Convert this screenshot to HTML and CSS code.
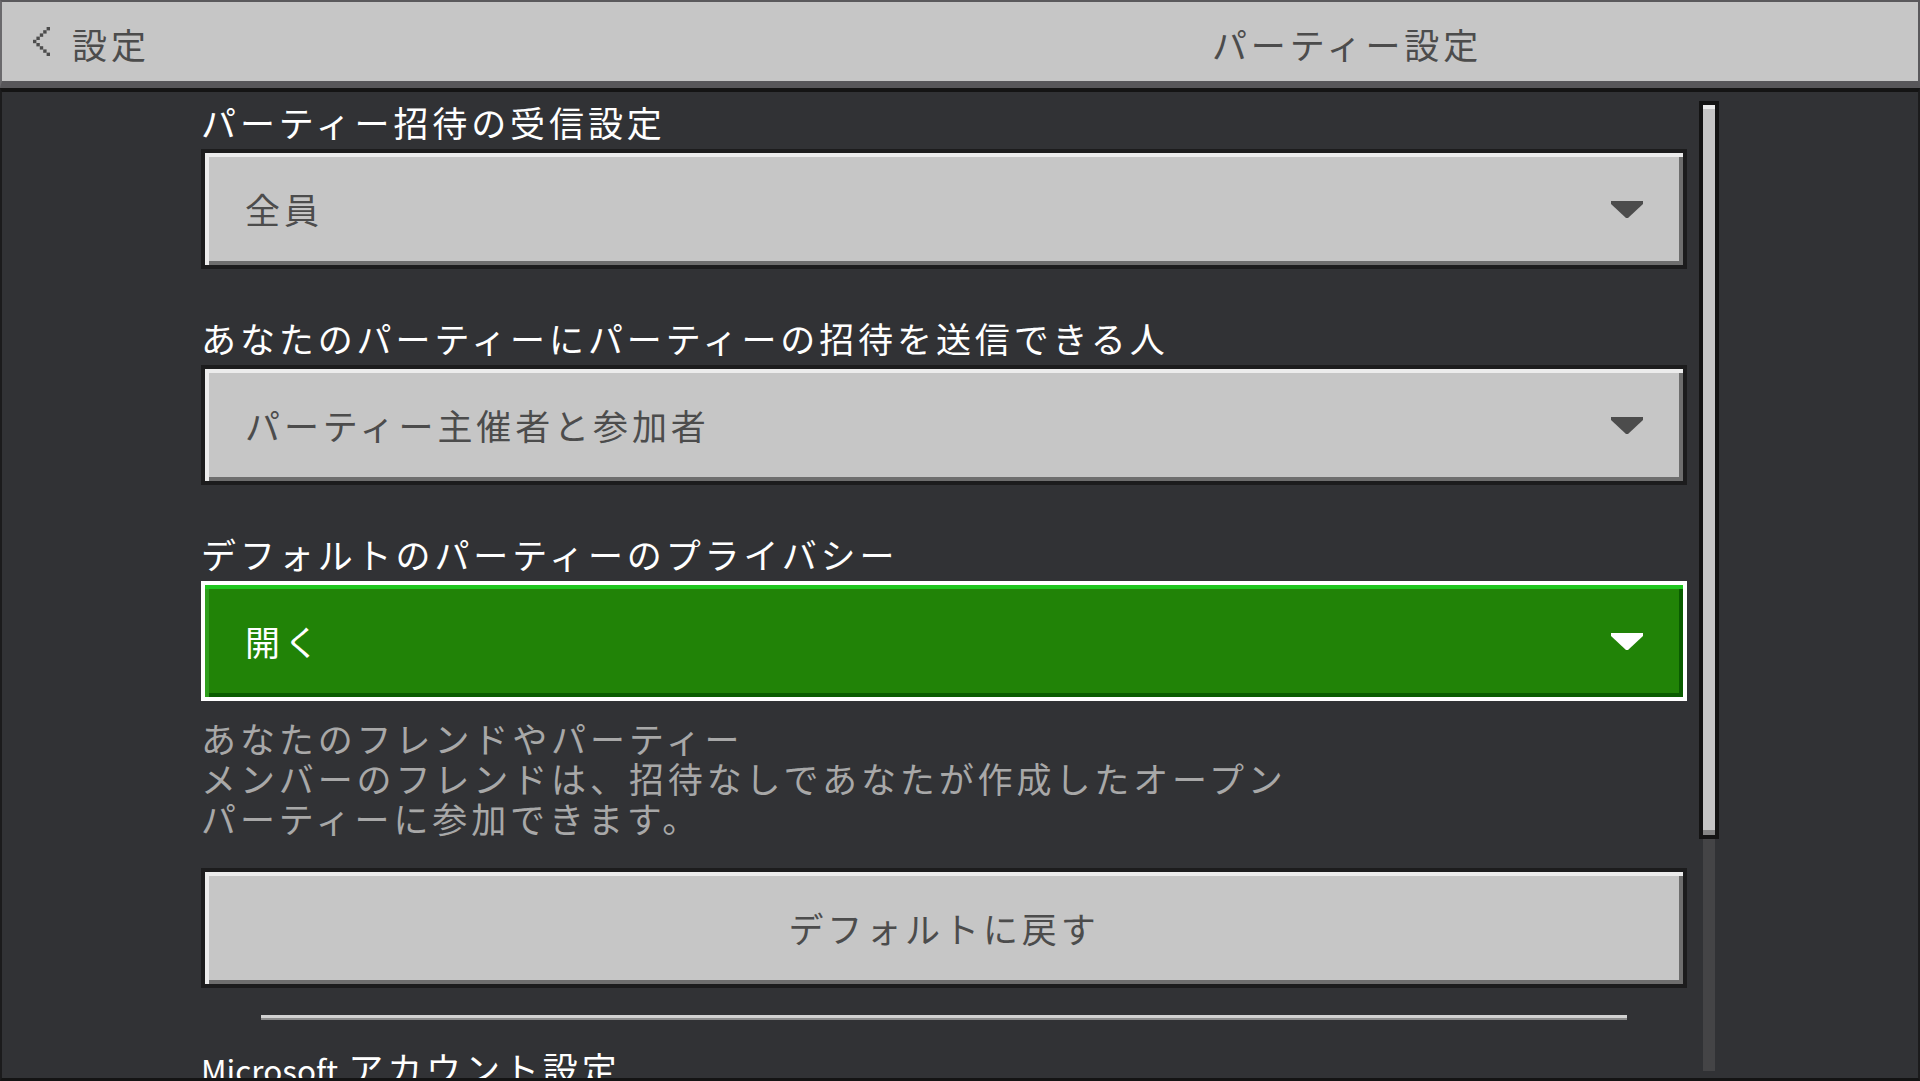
FILE: index.html
```html
<!DOCTYPE html>
<html lang="ja">
<head>
<meta charset="utf-8">
<title>パーティー設定</title>
<link rel="stylesheet" href="styles.css">
</head>
<body>
<div class="app">
  <header class="topbar">
    <div class="back">
      <svg class="chev" width="17" height="29" viewBox="0 0 17 29" aria-hidden="true">
        <g fill="#4c4c4c">
          <rect x="13.6" y="0" width="3.4" height="3.4"/>
          <rect x="10.2" y="3.2" width="3.4" height="3.4"/>
          <rect x="6.8" y="6.4" width="3.4" height="3.4"/>
          <rect x="3.4" y="9.6" width="3.4" height="3.4"/>
          <rect x="0" y="12.8" width="3.4" height="3.4"/>
          <rect x="3.4" y="16" width="3.4" height="3.4"/>
          <rect x="6.8" y="19.2" width="3.4" height="3.4"/>
          <rect x="10.2" y="22.4" width="3.4" height="3.4"/>
          <rect x="13.6" y="25.6" width="3.4" height="3.4"/>
        </g>
      </svg>
      <span class="back-text">設定</span>
    </div>
    <div class="title">パーティー設定</div>
  </header>
  <main class="main">
    <div class="column">
      <section class="field">
        <div class="label">パーティー招待の受信設定</div>
        <div class="dropdown">
          <span class="value">全員</span>
          <svg class="arrow" width="32" height="17" viewBox="0 0 32 17" aria-hidden="true"><polygon points="0,0 32,0 32,3 17,17 15,17 0,3" fill="#4c4c4c"/></svg>
        </div>
      </section>
      <section class="field">
        <div class="label">あなたのパーティーにパーティーの招待を送信できる人</div>
        <div class="dropdown">
          <span class="value">パーティー主催者と参加者</span>
          <svg class="arrow" width="32" height="17" viewBox="0 0 32 17" aria-hidden="true"><polygon points="0,0 32,0 32,3 17,17 15,17 0,3" fill="#4c4c4c"/></svg>
        </div>
      </section>
      <section class="field last">
        <div class="label">デフォルトのパーティーのプライバシー</div>
        <div class="dropdown active">
          <span class="value">開く</span>
          <svg class="arrow" width="32" height="17" viewBox="0 0 32 17" aria-hidden="true"><polygon points="0,0 32,0 32,3 17,17 15,17 0,3" fill="#ffffff"/></svg>
        </div>
      </section>
      <p class="desc">あなたのフレンドやパーティー<br>メンバーのフレンドは、招待なしであなたが作成したオープン<br>パーティーに参加できます。</p>
      <button class="btn" type="button">デフォルトに戻す</button>
      <div class="sep"></div>
      <div class="label section"><span class="latin">Microsoft </span>アカウント設定</div>
    </div>
    <div class="scroll">
      <div class="thumb"></div>
      <div class="track"></div>
    </div>
  </main>
</div>
</body>
</html>
```

FILE: styles.css
```css
html, body {
  margin: 0;
  padding: 0;
  height: 100%;
}

body {
  background: #1b1b1c;
  font-family: "Noto Sans CJK JP", "Noto Sans", sans-serif;
  overflow: hidden;
}

.app {
  width: 1920px;
  height: 1081px;
  display: flex;
  flex-direction: column;
}

.topbar {
  flex: none;
  box-sizing: content-box;
  height: 74px;
  padding-top: 5px;
  background: #c6c6c6;
  border-top: 2px solid #5a595c;
  border-left: 2px solid #6a696c;
  border-right: 2px solid #5a595c;
  border-bottom: 7px solid #58575a;
  display: grid;
  grid-template-columns: 774px 1fr;
  align-items: center;
  color: #4c4c4c;
  font-size: 35px;
  line-height: 40px;
  letter-spacing: 3.9px;
}

.back {
  display: flex;
  align-items: center;
  padding-left: 31px;
  gap: 22px;
}

.chev {
  display: block;
  flex: none;
  margin-bottom: 6px;
}

.back-text {
  white-space: nowrap;
}

.title {
  text-align: center;
  white-space: nowrap;
}

.main {
  flex: none;
  height: 986px;
  background: #313235;
  border-top: 4px solid #141414;
  border-bottom: 3px solid #141414;
  border-left: 2px solid #1b1b1c;
  border-right: 2px solid #1b1b1c;
  display: flex;
  align-items: flex-start;
  padding-left: 199px;
  overflow: hidden;
}

.column {
  flex: none;
  width: 1486px;
  padding-top: 10px;
}

.label {
  color: #ffffff;
  font-size: 35px;
  line-height: 40px;
  letter-spacing: 3.9px;
  white-space: nowrap;
  margin-bottom: 7px;
}

.label .latin {
  font-size: 31.5px;
  letter-spacing: 0;
  word-spacing: 3px;
}

.field {
  margin-bottom: 49px;
}

.field.last {
  margin-bottom: 0;
}

.dropdown,
.btn {
  box-sizing: border-box;
  height: 120px;
  width: 100%;
  border: 4px solid #1c1c1d;
  background: #c6c6c6;
  box-shadow: inset 4px 4px 0 #ececec, inset -4px -4px 0 #6e6e6e;
  display: flex;
  align-items: center;
  justify-content: space-between;
  padding: 0 40px;
  color: #4c4c4c;
  font-family: inherit;
  font-size: 35px;
  line-height: 40px;
  letter-spacing: 3.9px;
}

.dropdown.active {
  border-color: #ffffff;
  background: #218307;
  box-shadow: inset 0 4px 0 #1fc51f, inset 4px 0 0 #2f9f1d, inset -4px -4px 0 #0a5c00;
  color: #ffffff;
}

.value {
  white-space: nowrap;
}

.arrow {
  display: block;
  flex: none;
}

.desc {
  margin: 17px 0 0;
  color: #a8a8a8;
  font-size: 35px;
  line-height: 40px;
  letter-spacing: 3.9px;
  white-space: nowrap;
}

.btn {
  margin-top: 30px;
  justify-content: center;
  cursor: pointer;
}

.sep {
  margin: 27px 60px 0;
  height: 3px;
  background: #d2d2d2;
  border-bottom: 2px solid #8c8c8c;
}

.label.section {
  margin-top: 28px;
}

.scroll {
  flex: none;
  width: 20px;
  margin-left: 12px;
  padding-top: 9px;
}

.thumb {
  box-sizing: border-box;
  height: 738px;
  border: 4px solid #141414;
  background: #c6c6c6;
  box-shadow: inset 0 4px 0 #ececec, inset 0 -5px 0 #858585;
}

.track {
  width: 12px;
  margin-left: 4px;
  height: 232px;
  background: #444446;
}
```
